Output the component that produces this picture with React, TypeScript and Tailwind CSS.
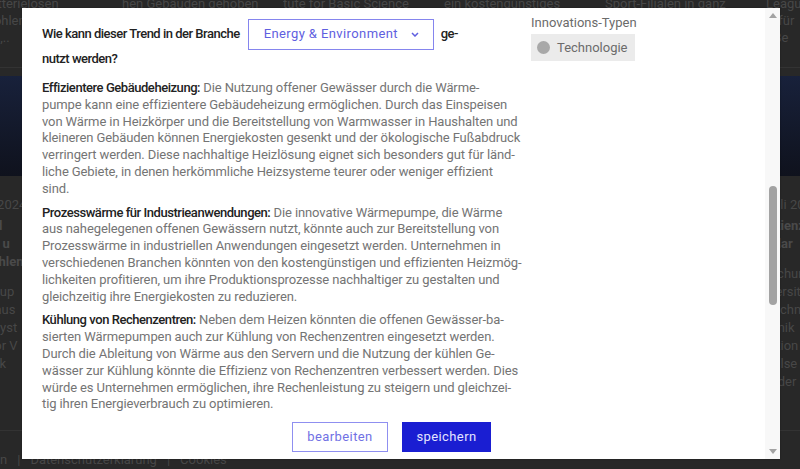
import React from "react";

type Card = {
  top: string[];
  date?: string;
  title?: string[];
  body?: string[];
};

const cards: Card[] = [
  {
    top: ["mit batterielosen", "und Kohlens\u00e4ures", "Modell,.."],
    date: "12.03.2024",
    title: ["Veränd", "Ketten u", "Empfehlen"],
    body: ["Smart-up", "Haus aus", "neue Syst", "sich vor V", "Entwick", "Ziele", "Leben"],
  },
  { top: ["hen Gebäuden gehoben"] },
  { top: ["tute for Basic Science"] },
  { top: ["ein kostengünstiges"] },
  { top: ["Sport-Filialen in ganz"] },
  {
    top: ["League", "r\u201c für", "t Be"],
    date: "Juli 2024",
    title: ["fizienz", "t dar"],
    body: ["rschung", "iversität", "Technik", "ronik", "lation", "pulse", "tt der"],
  },
];

const para1 = [
  "pumpe kann eine effizientere Gebäudeheizung ermöglichen. Durch das Einspeisen",
  "von Wärme in Heizkörper und die Bereitstellung von Warmwasser in Haushalten und",
  "kleineren Gebäuden können Energiekosten gesenkt und der ökologische Fußabdruck",
  "verringert werden. Diese nachhaltige Heizlösung eignet sich besonders gut für länd-",
  "liche Gebiete, in denen herkömmliche Heizsysteme teurer oder weniger effizient",
  "sind.",
];

const para2 = [
  "aus nahegelegenen offenen Gewässern nutzt, könnte auch zur Bereitstellung von",
  "Prozesswärme in industriellen Anwendungen eingesetzt werden. Unternehmen in",
  "verschiedenen Branchen könnten von den kostengünstigen und effizienten Heizmög-",
  "lichkeiten profitieren, um ihre Produktionsprozesse nachhaltiger zu gestalten und",
  "gleichzeitig ihre Energiekosten zu reduzieren.",
];

const para3 = [
  "sierten Wärmepumpen auch zur Kühlung von Rechenzentren eingesetzt werden.",
  "Durch die Ableitung von Wärme aus den Servern und die Nutzung der kühlen Ge-",
  "wässer zur Kühlung könnte die Effizienz von Rechenzentren verbessert werden. Dies",
  "würde es Unternehmen ermöglichen, ihre Rechenleistung zu steigern und gleichzei-",
  "tig ihren Energieverbrauch zu optimieren.",
];

function Paragraph({ label, first, rest }: { label: string; first: string; rest: string[] }) {
  return (
    <div className="mb-[7px]">
      <div className="whitespace-nowrap">
        <span className="font-medium tracking-[-0.45px] text-[#222222]">{label}</span> {first}
      </div>
      {rest.map((line) => (
        <div key={line} className="whitespace-nowrap">
          {line}
        </div>
      ))}
    </div>
  );
}

function PageCard({ card }: { card: Card }) {
  return (
    <div className="flex w-[145px] shrink-0 flex-col overflow-hidden text-[13px] leading-[17px] text-[#474747]">
      <div className="-mt-[5px] h-[51px]">
        {card.top.map((t) => (
          <div key={t} className="whitespace-nowrap">
            {t}
          </div>
        ))}
      </div>
      <div className="mt-[21px] border-t border-[#333333]" />
      <div className="mt-[8px] h-[100px] bg-gradient-to-b from-[#18213b] to-[#0f121d]" />
      {card.date && <div className="mt-[20px] whitespace-nowrap">{card.date}</div>}
      {card.title && (
        <div className="mt-[4px] font-bold leading-[18px] text-[#4a4a4a]">
          {card.title.map((t) => (
            <div key={t} className="whitespace-nowrap">
              {t}
            </div>
          ))}
        </div>
      )}
      {card.body && (
        <div className="mt-[12px] leading-[18px]">
          {card.body.map((t) => (
            <div key={t} className="whitespace-nowrap">
              {t}
            </div>
          ))}
        </div>
      )}
    </div>
  );
}

function Scrollbar() {
  return (
    <div className="flex w-[15px] shrink-0 flex-col bg-[#f8f8f8]">
      <div className="flex h-[15px] items-center justify-center">
        <svg width="8" height="5" viewBox="0 0 8 5">
          <path d="M4 0 L8 5 L0 5 Z" fill="#a3a3a3" />
        </svg>
      </div>
      <div className="flex flex-1 flex-col items-center">
        <div className="h-[163px]" />
        <div className="h-[119px] w-[8px] rounded-full bg-[#a3a3a3]" />
      </div>
      <div className="flex h-[15px] items-center justify-center">
        <svg width="8" height="5" viewBox="0 0 8 5">
          <path d="M0 0 L8 0 L4 5 Z" fill="#a3a3a3" />
        </svg>
      </div>
    </div>
  );
}

export default function App() {
  return (
    <div className="relative h-[469px] w-[800px] overflow-hidden bg-[#282828] font-['Roboto',sans-serif]">
      {/* page content behind the dialog */}
      <div className="flex h-full flex-col" aria-hidden="true">
        <div className="-ml-[39px] flex gap-[16px]">
          {cards.map((c) => (
            <PageCard key={c.top[0]} card={c} />
          ))}
        </div>
        <div className="mt-auto border-t border-[#333333] pb-[1px] pt-[20px] text-[13px] leading-[17px] text-[#474747]">
          <div className="flex gap-[10px] whitespace-nowrap">
            <span>n</span>
            <span>|</span>
            <span>Datenschutzerklärung</span>
            <span>|</span>
            <span>Cookies</span>
          </div>
        </div>
      </div>

      {/* dialog */}
      <div className="absolute left-[22px] top-[8px] flex h-[451px] w-[758px] bg-white shadow-[0_0_2px_rgba(0,0,0,0.3)]">
        <div className="flex flex-1 gap-[40px] pl-[20px]">
          <div className="flex w-[449px] shrink-0 flex-col text-[13px] leading-[16.8px] tracking-[-0.1px] text-[#747474]">
            <div className="mt-[11px] flex items-center font-medium tracking-[-0.5px] text-[#222222]">
              <span className="whitespace-nowrap">Wie kann dieser Trend in der Branche</span>
              <div className="ml-[8px] flex h-[31px] w-[186px] items-center border border-[#8585ee] pl-[15px] font-normal tracking-[0.4px] text-[#5f5fe0]">
                <span className="whitespace-nowrap">Energy &amp; Environment</span>
                <svg className="ml-[13px]" width="8" height="5" viewBox="0 0 8 5" fill="none">
                  <path d="M1 1 L4 4 L7 1" stroke="#5f5fe0" strokeWidth="1.5" />
                </svg>
              </div>
              <span className="ml-[7px]">ge-</span>
            </div>
            <div className="font-medium leading-[17px] tracking-[-0.5px] text-[#222222]">nutzt werden?</div>

            <div className="mt-[13px]">
              <Paragraph
                label="Effizientere Gebäudeheizung:"
                first="Die Nutzung offener Gewässer durch die Wärme-"
                rest={para1}
              />
              <Paragraph
                label="Prozesswärme für Industrieanwendungen:"
                first="Die innovative Wärmepumpe, die Wärme"
                rest={para2}
              />
              <Paragraph
                label="Kühlung von Rechenzentren:"
                first="Neben dem Heizen könnten die offenen Gewässer-ba-"
                rest={para3}
              />
            </div>

            <div className="mt-[2px] flex justify-end gap-[14px] tracking-[0.4px]">
              <button className="h-[30px] w-[96px] border border-[#8f8ff0] text-[#7171e4]">bearbeiten</button>
              <button className="h-[30px] w-[89px] bg-[#1a1ed2] text-[#e4e4ff]">speichern</button>
            </div>
          </div>

          <div className="mt-[6px] flex flex-col items-start text-[13px] text-[#6b6b6b]">
            <div className="leading-[17px]">Innovations-Typen</div>
            <div className="mt-[3px] flex h-[27px] items-center gap-[7px] bg-[#ebebeb] pl-[6px] pr-[7px]">
              <span className="h-[13px] w-[13px] rounded-full bg-[#a8a8a8]" />
              <span>Technologie</span>
            </div>
          </div>
        </div>
        <Scrollbar />
      </div>
    </div>
  );
}
